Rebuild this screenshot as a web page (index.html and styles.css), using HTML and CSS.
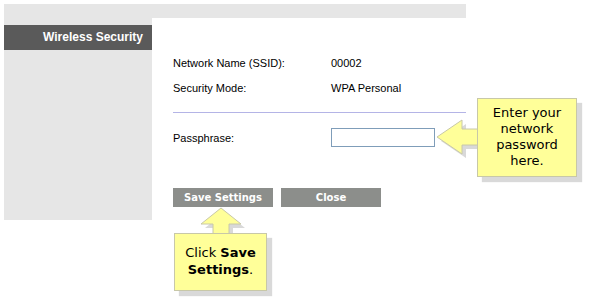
FILE: index.html
```html
<!DOCTYPE html>
<html lang="en">
<head>
    <meta charset="UTF-8">
    <title>Wireless Security</title>
    <link rel="stylesheet" href="styles.css">
</head>
<body>
<div class="page">
    <div class="topbar"></div>
    <div class="layout">
        <div class="sidebar">
            <div class="section-title">Wireless Security</div>
        </div>
        <div class="main">
            <div class="row"><span class="label">Network Name (SSID):</span><span>00002</span></div>
            <div class="row"><span class="label">Security Mode:</span><span>WPA Personal</span></div>
            <div class="divider"></div>
            <div class="row pass-row"><span class="label">Passphrase:</span><input class="pass" type="text"></div>
            <div class="buttons">
                <button class="btn">Save Settings</button>
                <button class="btn">Close</button>
            </div>
        </div>
    </div>

    <!-- callouts -->
    <svg class="arrow arrow-left" width="50" height="45" viewBox="437 118 50 45">
        <polygon class="shadow" points="441,141 466,124 466,133 482,133 482,149 466,149 466,158"/>
        <polygon class="fill" points="437,137 462,120 462,129 480,129 480,145 462,145 462,154"/>
    </svg>
    <div class="callout callout-right">Enter your network password here.</div>

    <svg class="arrow arrow-up" width="50" height="30" viewBox="198 206 50 30">
        <polygon class="shadow" points="225,212 245,228 233,228 233,238 217,238 217,228 205,228"/>
        <polygon class="fill" points="221,208 241,224 229,224 229,236 213,236 213,224 201,224"/>
    </svg>
    <div class="callout callout-bottom">Click <b>Save</b><br><b>Settings</b>.</div>
</div>
</body>
</html>
```

FILE: styles.css
```css
body {
    margin: 0;
    background-color: white;
    font-family: "Liberation Sans", Arial, sans-serif;
    font-size: 11px;
    color: black;
}

.page {
    position: relative;
    width: 591px;
    height: 300px;
    padding: 4px;
    box-sizing: border-box;
}

.topbar {
    width: 462px;
    height: 14px;
    background-color: #e6e6e6;
}

.layout {
    display: flex;
}

.sidebar {
    width: 148px;
    height: 202px;
    padding-top: 7px;
    box-sizing: border-box;
    background-color: #e6e6e6;
}

.section-title {
    height: 25px;
    line-height: 25px;
    padding-right: 9px;
    text-align: right;
    background-color: #5a5a5a;
    color: white;
    font-weight: bold;
    font-size: 12px;
}

.main {
    width: 314px;
    padding: 32px 0 0 21px;
    box-sizing: border-box;
}

.row {
    display: flex;
    align-items: center;
    height: 25px;
}

.label {
    width: 158px;
}

.divider {
    margin-top: 12px;
    height: 1px;
    background-color: #b4b4e6;
}

.pass-row {
    margin-top: 15px;
    height: 19px;
}

.pass {
    width: 104px;
    height: 19px;
    box-sizing: border-box;
    border: 1px solid #7f9db9;
    margin: 0;
    padding: 0;
}

.buttons {
    display: flex;
    gap: 8px;
    margin-top: 41px;
}

.btn {
    width: 100px;
    height: 19px;
    padding: 0;
    border: none;
    background-color: #8c8e8b;
    color: white;
    font-family: "DejaVu Sans", Verdana, sans-serif;
    font-weight: bold;
    font-size: 10px;
}

/* Callouts */
.arrow {
    position: absolute;
}

.arrow-left {
    left: 437px;
    top: 118px;
}

.arrow-up {
    left: 198px;
    top: 206px;
}

.arrow .shadow {
    fill: #d9d9d9;
}

.arrow .fill {
    fill: #ffff99;
    stroke: #c8c8a8;
    stroke-width: 1;
}

.callout {
    position: absolute;
    box-sizing: border-box;
    background-color: #ffff99;
    border: 1px solid #c8c8a8;
    box-shadow: 5px 5px 1px #d9d9d9;
    text-align: center;
    font-family: "DejaVu Sans", Verdana, sans-serif;
    font-size: 13px;
    color: black;
}

.callout-right {
    left: 477px;
    top: 98px;
    width: 100px;
    height: 79px;
    padding: 6px 8px 0;
    line-height: 16px;
}

.callout-bottom {
    left: 174px;
    top: 233px;
    width: 93px;
    height: 58px;
    padding-top: 10px;
    line-height: 17px;
}
```
